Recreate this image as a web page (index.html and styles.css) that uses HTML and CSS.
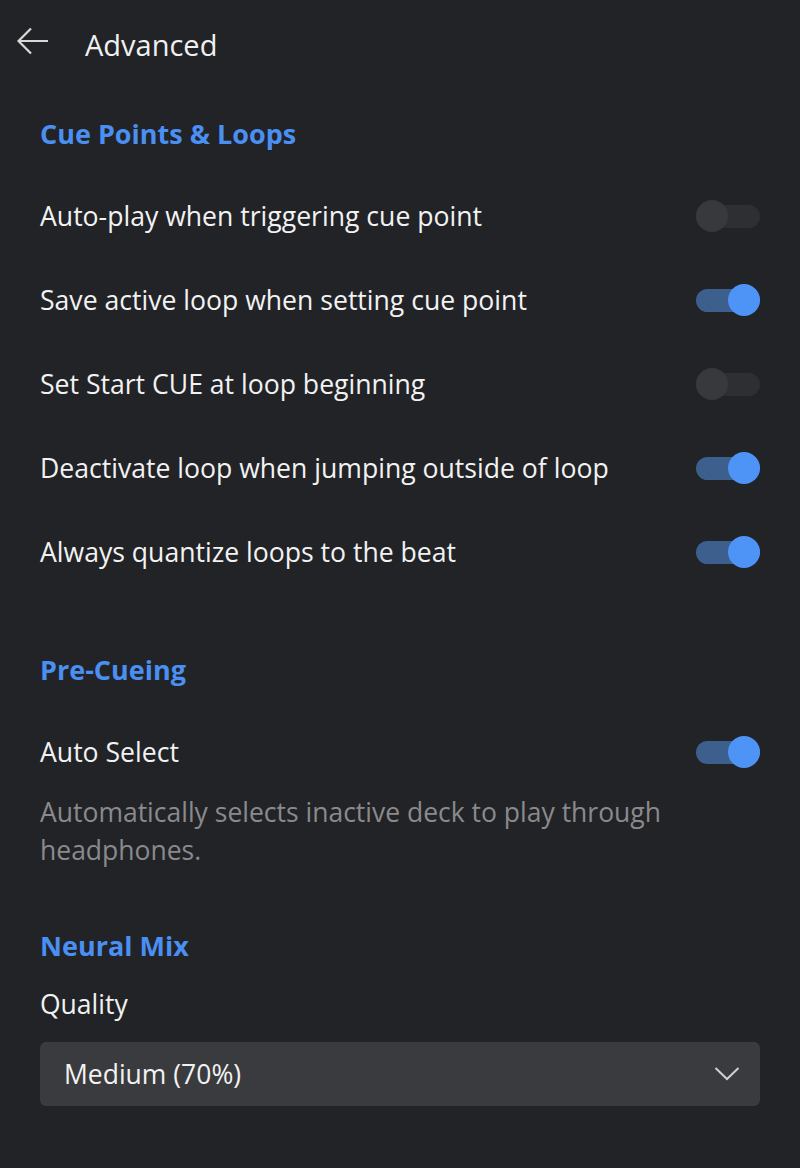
FILE: index.html
```html
<!DOCTYPE html>
<html>
<head>
<meta charset="utf-8">
<link rel="stylesheet" href="styles.css">
</head>
<body>
<div class="page">
  <header class="topbar">
    <svg class="back" width="34" height="32" viewBox="0 0 34 32"><path d="M33 14H3.5M16 1.5L3.5 14L16 26.5" fill="none" stroke="#d8d8d8" stroke-width="2.2"/></svg>
    <span class="title">Advanced</span>
  </header>
  <main class="content">
    <section class="section">
      <h2 class="heading">Cue Points &amp; Loops</h2>
      <div class="row"><span class="label">Auto-play when triggering cue point</span><span class="toggle"></span></div>
      <div class="row"><span class="label">Save active loop when setting cue point</span><span class="toggle on"></span></div>
      <div class="row"><span class="label">Set Start CUE at loop beginning</span><span class="toggle"></span></div>
      <div class="row"><span class="label">Deactivate loop when jumping outside of loop</span><span class="toggle on"></span></div>
      <div class="row"><span class="label">Always quantize loops to the beat</span><span class="toggle on"></span></div>
    </section>
    <section class="section pre">
      <h2 class="heading">Pre-Cueing</h2>
      <div class="row"><span class="label">Auto Select</span><span class="toggle on"></span></div>
      <p class="desc">Automatically selects inactive deck to play through headphones.</p>
    </section>
    <section class="section neural">
      <h2 class="heading">Neural Mix</h2>
      <div class="field-label">Quality</div>
      <div class="select">
        <span>Medium (70%)</span>
        <svg width="26" height="16" viewBox="0 0 26 16"><path d="M1.5 2L13 13L24.5 2" fill="none" stroke="#cfcfcf" stroke-width="2"/></svg>
      </div>
    </section>
  </main>
</div>
</body>
</html>
```
FILE: styles.css
```css
* { box-sizing: border-box; margin: 0; padding: 0; }
html, body { background: #222327; }
body { font-family: "Open Sans", "Noto Sans", sans-serif; color: #f2f2f2; }
.page { width: 800px; height: 1168px; }
.topbar { display: flex; align-items: center; height: 90px; padding-left: 15px; padding-bottom: 2px; }
.back { margin-right: 36px; margin-top: -2px; }
.title { font-size: 29px; color: #f0f0f0; }
.content { padding: 0 40px; }
.heading { color: #4a8ff2; font-size: 27px; font-weight: 700; line-height: 32px; }
.section .heading { margin-top: 28px; margin-bottom: 24px; }
.row { display: flex; align-items: center; justify-content: space-between; height: 84px; }
.label { font-size: 26.6px; }
.toggle { position: relative; width: 64px; height: 23px; border-radius: 12px; background: #2e2f33; flex: none; }
.toggle::after { content: ""; position: absolute; left: 0; top: -5px; width: 32px; height: 32px; border-radius: 50%; background: #38393d; }
.toggle.on { background: #3d5f8e; }
.toggle.on::after { left: 32px; background: #4e94f6; }
.pre .heading { margin-top: 60px; }
.desc { color: #8a8a8c; font-size: 26.5px; line-height: 38px; margin-top: -1px; }
.neural .heading { margin-top: 61px; margin-bottom: 23px; }
.field-label { font-size: 26.5px; line-height: 38px; }
.select { display: flex; align-items: center; justify-content: space-between; height: 64px; margin-top: 19px; background: #3a3b3e; border-radius: 6px; padding: 0 20px 0 24px; font-size: 26.5px; }
```
